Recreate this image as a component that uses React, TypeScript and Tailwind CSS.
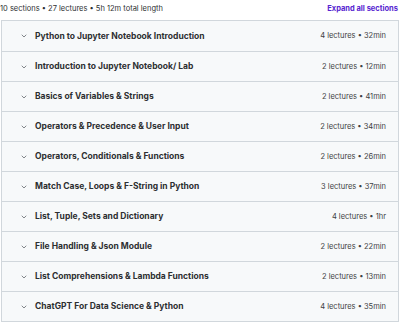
const sections = [
  { title: "Python to Jupyter Notebook Introduction", meta: "4 lectures • 32min" },
  { title: "Introduction to Jupyter Notebook/ Lab", meta: "2 lectures • 12min" },
  { title: "Basics of Variables & Strings", meta: "2 lectures • 41min" },
  { title: "Operators & Precedence & User Input", meta: "2 lectures • 34min" },
  { title: "Operators, Conditionals & Functions", meta: "2 lectures • 26min" },
  { title: "Match Case, Loops & F-String in Python", meta: "3 lectures • 37min" },
  { title: "List, Tuple, Sets and Dictionary", meta: "4 lectures • 1hr" },
  { title: "File Handling & Json Module", meta: "2 lectures • 22min" },
  { title: "List Comprehensions & Lambda Functions", meta: "2 lectures • 13min" },
  { title: "ChatGPT For Data Science & Python", meta: "4 lectures • 35min" },
];

function Chevron() {
  return (
    <svg width="8" height="8" viewBox="0 0 24 24" fill="none" stroke="#6a6f73" strokeWidth="2.5" strokeLinecap="round" strokeLinejoin="round">
      <path d="M6 9l6 6 6-6" />
    </svg>
  );
}

export default function App() {
  return (
    <div className="w-[400px] h-[322px] bg-white text-[#2d2f31] font-['Inter',sans-serif] overflow-hidden">
      <div className="flex items-center justify-between h-[20px] pl-0 pr-[2px] pb-[3px]">
        <span className="text-[7.5px] text-[#2d2f31]">10 sections • 27 lectures • 5h 12m total length</span>
        <span className="text-[7.5px] font-bold text-[#5624d0]">Expand all sections</span>
      </div>
      <div className="mx-[1px] border border-[#d1d7dc]">
        {sections.map((s, i) => (
          <div
            key={i}
            className={`flex items-center h-[30px] bg-[#f7f9fa] pl-[18px] pr-[12px] ${i > 0 ? "border-t border-[#d1d7dc]" : ""}`}
          >
            <Chevron />
            <span className="ml-[7px] text-[8.5px] font-bold flex-1">{s.title}</span>
            <span className="text-[7.5px] text-[#3e4143]">{s.meta}</span>
          </div>
        ))}
      </div>
    </div>
  );
}
